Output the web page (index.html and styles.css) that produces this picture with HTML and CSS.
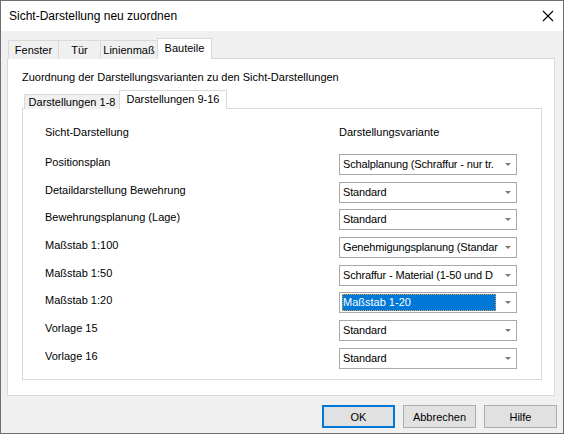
FILE: index.html
```html
<!DOCTYPE html>
<html>
<head>
<meta charset="utf-8">
<link rel="stylesheet" href="styles.css">
</head>
<body>
<div class="window">
  <div class="titlebar">
    <span class="title">Sicht-Darstellung neu zuordnen</span>
    <svg class="close" width="12" height="12" viewBox="0 0 12 12"><path d="M1 1 L11 11 M11 1 L1 11" stroke="#000" stroke-width="1.1" fill="none"/></svg>
  </div>
  <div class="outer">
    <div class="tabstrip">
      <div class="tab t1">Fenster</div>
      <div class="tab t2">Tür</div>
      <div class="tab t3">Linienmaß</div>
      <div class="tab t4 sel">Bauteile</div>
    </div>
    <div class="panel">
      <div class="caption">Zuordnung der Darstellungsvarianten zu den Sicht-Darstellungen</div>
      <div class="tabstrip inner-strip">
        <div class="tab i1">Darstellungen 1-8</div>
        <div class="tab i2 sel">Darstellungen 9-16</div>
      </div>
      <div class="inner">
        <div class="head">
          <span>Sicht-Darstellung</span>
          <span class="h2">Darstellungsvariante</span>
        </div>
        <div class="rows">
          <div class="lbl">Positionsplan</div>
          <div class="combo"><span class="val">Schalplanung (Schraffur - nur tr.</span><span class="arr"></span></div>
          <div class="lbl">Detaildarstellung Bewehrung</div>
          <div class="combo"><span class="val">Standard</span><span class="arr"></span></div>
          <div class="lbl">Bewehrungsplanung (Lage)</div>
          <div class="combo"><span class="val">Standard</span><span class="arr"></span></div>
          <div class="lbl">Maßstab 1:100</div>
          <div class="combo"><span class="val">Genehmigungsplanung (Standar</span><span class="arr"></span></div>
          <div class="lbl">Maßstab 1:50</div>
          <div class="combo"><span class="val">Schraffur - Material (1-50 und D</span><span class="arr"></span></div>
          <div class="lbl">Maßstab 1:20</div>
          <div class="combo"><span class="val focus">Maßstab 1-20</span><span class="arr"></span></div>
          <div class="lbl">Vorlage 15</div>
          <div class="combo"><span class="val">Standard</span><span class="arr"></span></div>
          <div class="lbl">Vorlage 16</div>
          <div class="combo"><span class="val">Standard</span><span class="arr"></span></div>
        </div>
      </div>
    </div>
  </div>
  <div class="buttons">
    <div class="btn def">OK</div>
    <div class="btn">Abbrechen</div>
    <div class="btn">Hilfe</div>
  </div>
</div>
</body>
</html>
```
FILE: styles.css
```css
* { box-sizing: border-box; }
html, body { margin: 0; padding: 0; }
body { font-family: "Liberation Sans", Arial, sans-serif; font-size: 11px; color: #000; }
.window {
  width: 564px; height: 434px;
  border: 1px solid #6f6f6f;
  background: #f0f0f0;
  display: flex; flex-direction: column;
}
.titlebar {
  height: 30px; background: #fff;
  display: flex; align-items: center; justify-content: space-between;
  padding: 0 9px 0 8px;
  flex: none;
}
.title { font-size: 12px; }
.close { display: block; margin-top: -1px; }
.outer { padding: 8px 8px 0 6px; }
.tabstrip {
  display: flex; align-items: flex-end; height: 20px;
  position: relative; z-index: 2; margin-bottom: -1px; padding-left: 1px;
}
.tab {
  height: 19px; border: 1px solid #d9d9d9; border-bottom: none;
  background: #f0f0f0; display: flex; align-items: center; justify-content: center;
  margin-right: -1px;
}
.tab.sel { height: 21px; background: #fff; padding-bottom: 2px; }
.t1 { width: 51px; }
.t2 { width: 43px; }
.t3 { width: 58px; }
.t4 { width: 55px; }
.panel {
  height: 338px; background: #fff; border: 1px solid #d9d9d9;
  padding: 11px 12px 0 14px;
}
.caption { height: 14px; line-height: 14px; }
.inner-strip { margin-top: 6px; height: 19px; padding-left: 2px; }
.inner-strip .tab { height: 15px; }
.inner-strip .tab.sel { height: 19px; padding-bottom: 2px; }
.i1 { width: 96px; }
.i2 { width: 108px; }
.inner {
  width: 520px; height: 272px;
  border: 1px solid #d9d9d9; background: #fff;
  padding: 16px 24px 0 22px;
}
.head { display: flex; height: 14px; line-height: 14px; }
.head .h2 { margin-left: auto; width: 178px; }
.rows {
  margin-top: 15px;
  display: grid; grid-template-columns: 1fr 178px;
  grid-auto-rows: 27.7px;
  align-items: start;
}
.lbl { height: 21px; line-height: 16px; }
.combo {
  height: 21px; border: 1px solid #a9a9a9; background: #fff;
  display: flex; align-items: center; position: relative;
  padding-left: 2px;
}
.val {
  white-space: nowrap; overflow: visible; width: 154px; height: 17px; line-height: 17px;
  padding-left: 1px; letter-spacing: -0.15px;
}
.val.focus { background: #0078d7; color: #fff; outline: 1px dotted #e0a040; outline-offset: -1px; letter-spacing: 0; }
.arr {
  position: absolute; right: 5px; top: 8px;
  width: 0; height: 0;
  border-left: 3px solid transparent; border-right: 3px solid transparent;
  border-top: 3px solid #7a7a7a;
}
.buttons {
  display: flex; justify-content: flex-end; gap: 8px;
  padding: 9px 6px 0 0;
}
.btn {
  width: 73px; height: 23px; border: 1px solid #adadad; background: #e1e1e1;
  display: flex; align-items: center; justify-content: center;
}
.btn.def { border: 2px solid #0078d7; }
```
